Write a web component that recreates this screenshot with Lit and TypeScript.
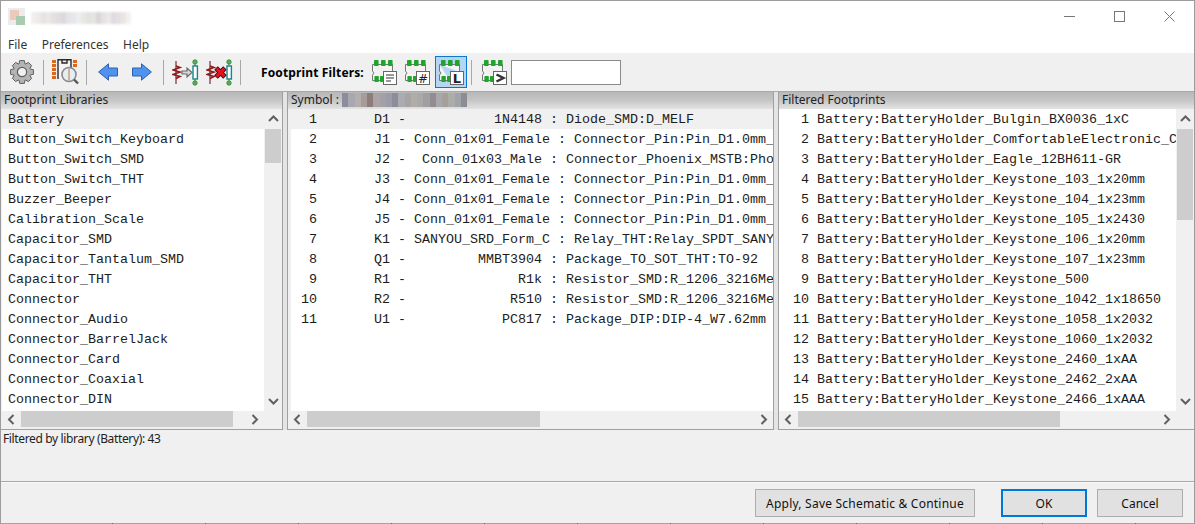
import { LitElement, css, html, svg } from 'lit'
import { customElement } from 'lit/decorators.js'

const LIBS = [
  'Battery', 'Button_Switch_Keyboard', 'Button_Switch_SMD', 'Button_Switch_THT', 'Buzzer_Beeper',
  'Calibration_Scale', 'Capacitor_SMD', 'Capacitor_Tantalum_SMD', 'Capacitor_THT', 'Connector',
  'Connector_Audio', 'Connector_BarrelJack', 'Connector_Card', 'Connector_Coaxial', 'Connector_DIN'
]

const PIN = 'Connector_Pin:Pin_D1.0mm_L'
const R = 'Resistor_SMD:R_1206_3216Met'
const SYMBOLS = [
  ['D1', '1N4148', 'Diode_SMD:D_MELF'],
  ['J1', 'Conn_01x01_Female', PIN],
  ['J2', 'Conn_01x03_Male', 'Connector_Phoenix_MSTB:Phoe'],
  ['J3', 'Conn_01x01_Female', PIN],
  ['J4', 'Conn_01x01_Female', PIN],
  ['J5', 'Conn_01x01_Female', PIN],
  ['K1', 'SANYOU_SRD_Form_C', 'Relay_THT:Relay_SPDT_SANYO'],
  ['Q1', 'MMBT3904', 'Package_TO_SOT_THT:TO-92'],
  ['R1', 'R1k', R],
  ['R2', 'R510', R],
  ['U1', 'PC817', 'Package_DIP:DIP-4_W7.62mm']
]

const FOOTPRINTS = [
  'Bulgin_BX0036_1xC', 'ComfortableElectronic_C', 'Eagle_12BH611-GR', 'Keystone_103_1x20mm',
  'Keystone_104_1x23mm', 'Keystone_105_1x2430', 'Keystone_106_1x20mm', 'Keystone_107_1x23mm',
  'Keystone_500', 'Keystone_1042_1x18650', 'Keystone_1058_1x2032', 'Keystone_1060_1x2032',
  'Keystone_2460_1xAA', 'Keystone_2462_2xAA', 'Keystone_2466_1xAAA'
]

// the name in the title bar and the symbol header is blurred out in the reference
const TITLE_BLUR = ['#f1eeee', '#eeeaea', '#e6e3e4', '#ece7e5', '#e3e0e2', '#dfdde0', '#dcd9de', '#e6e4e6', '#e5e8ea', '#eceeee',
  '#e8e7e6', '#e3e3dd', '#e6e4e2', '#d9d5d8', '#e4e2e2', '#ebe8e9', '#dfdbe0', '#e4e0e0', '#ebe5e2', '#f3f1f0']
const SYMBOL_BLUR = ['#8c8c9c', '#a8a8b0', '#b4aeac', '#a89c98', '#8c7c7c', '#aaa4a4', '#a4a0a8', '#9c9ca8', '#8c8c9c', '#acacb0',
  '#a8a4a4', '#b0aca8', '#aaa8a8', '#a0a0a0', '#948c90', '#a8a8ac', '#a4a09c', '#acaca8', '#a0a4a8', '#8c8c94']

function gearPath (cx: number, cy: number, r1: number, r2: number, teeth: number) {
  const pts: string[] = []
  for (let i = 0; i < teeth; i++) {
    const a = (i / teeth) * Math.PI * 2
    const w = Math.PI / teeth
    for (const [r, d] of [[r1, -w * 0.95], [r2, -w * 0.5], [r2, w * 0.5], [r1, w * 0.95]]) {
      pts.push(`${(cx + r * Math.cos(a + d)).toFixed(1)} ${(cy + r * Math.sin(a + d)).toFixed(1)}`)
    }
  }
  return 'M' + pts.join('L') + 'Z'
}

const gearIcon = html`<svg width="24" height="24" viewBox="0 0 24 24">
  <path d=${gearPath(12, 12, 8.6, 11.6, 8)} fill="#b4b4b4" stroke="#5e5e5e" stroke-width="1"/>
  <circle cx="12" cy="12" r="4.6" fill="#f0f0f0" stroke="#5e5e5e" stroke-width="1.2"/>
</svg>`

const inspectIcon = html`<svg width="28" height="26" viewBox="0 0 28 26">
  ${[1, 5, 9, 13, 17].map(y => svg`<rect x="0" y=${y} width="4" height="3" fill="#d9691e"/>`)}
  ${[1, 5].map(y => svg`<rect x="21" y=${y} width="4" height="3" fill="#d9691e"/>`)}
  <path d="M6 20V.8H19V9M10 .8V4H15V.8" fill="#f4f4f4" stroke="#2a2a2a" stroke-width="1.4"/>
  <circle cx="17" cy="15.5" r="7" fill="#e6eef2" stroke="#8a8a8a" stroke-width="1.6"/>
  <path d="M17 9.5V21.5" stroke="#c08a60" stroke-width="1.2"/>
  <path d="M22 20.5L26 24.5" stroke="#555" stroke-width="2.4"/>
</svg>`

const arrowLeft = html`<svg width="20" height="18" viewBox="0 0 20 18">
  <path d="M.6 9L10.5 .8V5H19.5V13H10.5V17.2Z" fill="#4f93ee" stroke="#2f62ac" stroke-width="1"/>
</svg>`

const arrowRight = html`<svg width="20" height="18" viewBox="0 0 20 18">
  <path d="M19.4 9L9.5 .8V5H.5V13H9.5V17.2Z" fill="#4f93ee" stroke="#2f62ac" stroke-width="1"/>
</svg>`

function netIcon (cross: boolean) {
  return html`<svg width="27" height="27" viewBox="0 0 27 27">
    <path d="M4 2V25" stroke="#9b5a5a" stroke-width="1.6"/>
    <path d="M4 7L8 8.5L1 11L8 13L1 15.5L8 17.5L4 19.5" fill="none" stroke="#8f1c1c" stroke-width="1.6"/>
    ${cross
      ? svg`<path d="M10 9L19 18M19 9L10 18" stroke="#111" stroke-width="5"/>
            <path d="M10.5 9.5L18.5 17.5M18.5 9.5L10.5 17.5" stroke="#e8101c" stroke-width="3.4"/>`
      : svg`<path d="M10 12H15V9L20 13.5L15 18V15H10Z" fill="#d8d8d8" stroke="#6a6a6a" stroke-width="1.2"/>`}
    <path d="M23 3V24" stroke="#3f9a3f" stroke-width="1"/>
    <rect x="21" y="7" width="4.4" height="13" fill="#fff" stroke="#16858c" stroke-width="1.4"/>
    <circle cx="23" cy="3" r="2.2" fill="#58b05a" stroke="#2f7f30" stroke-width=".8"/>
    <circle cx="23" cy="24" r="2.2" fill="#58b05a" stroke="#2f7f30" stroke-width=".8"/>
  </svg>`
}

function filterIcon (badge: unknown) {
  return html`<svg width="26" height="26" viewBox="0 0 26 26">
    <path d="M1.5 5.5H21.5V13M12 21.5H1.5V16L3 14L1.5 12V5.5" fill="#f4f4f4" stroke="#777" stroke-width="1"/>
    ${[3, 10, 17].map(x => svg`<rect x=${x} y="1" width="4.6" height="6" rx=".8" fill="#1fa42c"/>`)}
    ${[3.4, 9].map(x => svg`<rect x=${x} y="17" width="4.4" height="6" rx=".8" fill="#1fa42c"/>`)}
    <rect x="12.5" y="12.5" width="13" height="13" fill="#fff" stroke="#666" stroke-width="1"/>
    ${badge}
  </svg>`
}

const filterDesc = filterIcon(svg`<path d="M15 16H23M15 19H23M15 22H20" stroke="#333" stroke-width="1"/>`)
const filterPin = filterIcon(svg`<text class="badge" x="19" y="23.6" text-anchor="middle" font-size="12" font-style="italic">#</text>`)
const filterLib = filterIcon(svg`<text class="badge" x="19" y="23.8" text-anchor="middle" font-size="13" font-weight="700">L</text>`)
const filterName = filterIcon(svg`<path d="M15.5 15.5L22.5 19L15.5 22.5" fill="none" stroke="#333" stroke-width="2.4"/>`)

function chevron (dir: 'up' | 'down' | 'left' | 'right') {
  const d = { up: 'M1 7L5.5 2.5L10 7', down: 'M1 3L5.5 7.5L10 3', left: 'M7.5 1L3 5.5L7.5 10', right: 'M3.5 1L8 5.5L3.5 10' }[dir]
  return html`<svg class="chev" width="11" height="11" viewBox="0 0 11 11"><path d=${d} fill="none" stroke="#606060" stroke-width="2"/></svg>`
}

@customElement('app-root')
export class AppRoot extends LitElement {
  static styles = css`
    :host {
      display: block;
      font-family: "Noto Sans", sans-serif;
      font-size: 12px;
      color: #111;
    }
    .window {
      height: 524px;
      box-sizing: border-box;
      display: flex;
      flex-direction: column;
      background: #f0f0f0;
      border: 1px solid #9c9c9c;
      border-bottom: none;
      overflow: hidden;
    }
    .titlebar {
      height: 34px;
      flex: none;
      background: #fff;
      display: flex;
      align-items: flex-start;
      position: relative;
    }
    .app-icon {
      margin: 7px 0 0 7px;
      width: 17px;
      height: 17px;
      flex: none;
      background:
        linear-gradient(#a9cbb0, #a9cbb0) 8px 8px / 9px 9px no-repeat,
        linear-gradient(#edc9bc, #edc9bc) 2px 2px / 9px 10px no-repeat,
        #ececec;
    }
    .blur { display: flex; }
    .blur span { display: block; height: 100%; }
    .title-blur {
      margin: 11px 0 0 6px;
      height: 12px;
      width: 100px;
      filter: blur(1px);
    }
    .title-blur span { flex: 1; }
    .winbtns {
      margin-left: auto;
      display: flex;
    }
    .winbtn {
      width: 50px;
      height: 31px;
      display: flex;
      align-items: center;
      justify-content: center;
    }
    .menubar {
      height: 18px;
      flex: none;
      background: #fff;
      display: flex;
      gap: 14.5px;
      padding-left: 7px;
      line-height: 19px;
      color: #333;
    }
    .toolbar {
      height: 38px;
      flex: none;
      display: flex;
      align-items: center;
      border-bottom: 1px solid #a8a8a8;
      box-sizing: content-box;
    }
    .tool { display: flex; flex: none; }
    .sep {
      width: 1px;
      height: 25px;
      background: #a8a8a8;
      flex: none;
    }
    .filter-label { font-weight: 700; flex: none; color: #000; width: 104px; white-space: nowrap; letter-spacing: .14px; }
    .toggle {
      width: 30px;
      height: 30px;
      flex: none;
      display: flex;
      align-items: center;
      justify-content: center;
      border: 1px solid transparent;
    }
    .toggle.on { background: #b4d6f2; border-color: #0a78d0; }
    .search {
      width: 108px;
      height: 23px;
      background: #fff;
      border: 1px solid #8a8a8a;
      flex: none;
    }
    .badge { font-family: "DejaVu Sans", sans-serif; fill: #222; }
    .panels {
      height: 338px;
      flex: none;
      display: flex;
      gap: 4px;
      background: #e4e4e4;
    }
    .panel {
      display: grid;
      grid-template-rows: 17px 302px 17px 1fr;
      border: 1px solid #a0a0a0;
      border-width: 0 1px 1px 1px;
      box-sizing: border-box;
      background: #f0f0f0;
      min-width: 0;
    }
    .panel.left { width: 282px; border-left: none; }
    .panel.center { width: 487px; }
    .panel.right { width: 416px; border-right: none; }
    .head {
      background: linear-gradient(#b8b8b8, #c4c4c4 45%, #e2e2e2);
      display: flex;
      align-items: center;
      gap: 3px;
      padding-left: 3px;
      padding-bottom: 2px;
      box-sizing: border-box;
      line-height: 15px;
      white-space: nowrap;
      color: #222;
    }
    .symbol-blur {
      width: 125px;
      height: 14px;
      filter: blur(.6px);
    }
    .symbol-blur span { flex: 1; }
    .body {
      display: flex;
      min-width: 0;
      overflow: hidden;
    }
    .list {
      flex: 1;
      min-width: 0;
      overflow: hidden;
      background: #fff;
      font-family: "Liberation Mono", monospace;
      font-size: 13.33px;
      color: #1c1c1c;
    }
    .left .list { margin-left: 1px; }
    .center .list { margin-left: 3px; }
    .row {
      height: 20px;
      line-height: 22px;
      white-space: pre;
    }
    .row.sel { background: #f0f0f0; }
    .left .row { padding-left: 6px; }
    .center .row { display: flex; }
    .center .num { width: 26px; text-align: right; flex: none; }
    .center .txt { margin-left: 57px; }
    .right .row { padding-left: 6px; }
    .vbar {
      width: 18px;
      flex: none;
      display: flex;
      flex-direction: column;
      align-items: stretch;
    }
    .vbtn { height: 20px; display: flex; align-items: center; justify-content: center; flex: none; }
    .vthumb { background: #cdcdcd; margin: 0 1px; flex: none; }
    .vspace { flex: 1; }
    .hbar {
      display: flex;
      align-items: stretch;
      min-width: 0;
    }
    .left .hbar { padding-left: 1px; }
    .hbtn { width: 19px; display: flex; align-items: center; justify-content: center; flex: none; }
    .hthumb { background: #cdcdcd; margin: 0; flex: none; height: 16px; }
    .hspace { flex: 1; }
    .corner { width: 18px; flex: none; }
    .status {
      height: 52px;
      flex: none;
      padding-left: 2px;
      padding-top: 1px;
      line-height: 15px;
      letter-spacing: -.36px;
      box-sizing: border-box;
      color: #222;
      border-bottom: 1px solid #a8a8a8;
    }
    .actions {
      flex: 1;
      display: flex;
      align-items: flex-start;
      padding-top: 6px;
      padding-right: 11px;
      justify-content: flex-end;
      border-top: 1px solid #f8f8f8;
    }
    button {
      font: inherit;
      color: #111;
      background: #e1e1e1;
      border: 1px solid #adadad;
      box-sizing: border-box;
      height: 28px;
      padding: 0;
      flex: none;
    }
    .apply { width: 220px; margin-right: 26px; letter-spacing: .22px; }
    .ok { width: 86px; margin-right: 10px; border: 2px solid #0078d7; }
    .cancel { width: 86px; }
    .bottom-edge {
      height: 1px;
      flex: none;
      background: repeating-linear-gradient(90deg, #a4a4a4 0 92px, #666 92px 93px);
      background-position: 19px 0;
    }
  `

  _vbar (thumb: number) {
    return html`<div class="vbar">
      <div class="vbtn">${chevron('up')}</div>
      <div class="vthumb" style="height:${thumb}px"></div>
      <div class="vspace"></div>
      <div class="vbtn">${chevron('down')}</div>
    </div>`
  }

  _hbar (thumb: number, corner: boolean) {
    return html`<div class="hbar">
      <div class="hbtn">${chevron('left')}</div>
      <div class="hthumb" style="width:${thumb}px"></div>
      <div class="hspace"></div>
      <div class="hbtn">${chevron('right')}</div>
      ${corner ? html`<div class="corner"></div>` : ''}
    </div>`
  }

  render () {
    return html`<div class="window">
      <div class="titlebar">
        <div class="app-icon"></div>
        <div class="blur title-blur">${TITLE_BLUR.map(c => html`<span style="background:${c}"></span>`)}</div>
        <div class="winbtns">
          <div class="winbtn"><svg width="11" height="11" viewBox="0 0 11 11"><path d="M0 5.5H11" stroke="#777" fill="none"/></svg></div>
          <div class="winbtn"><svg width="11" height="11" viewBox="0 0 11 11"><rect x=".5" y=".5" width="10" height="10" stroke="#777" fill="none"/></svg></div>
          <div class="winbtn"><svg width="11" height="11" viewBox="0 0 11 11"><path d="M.5 .5L10.5 10.5M10.5 .5L.5 10.5" stroke="#777" fill="none"/></svg></div>
        </div>
      </div>
      <div class="menubar"><span>File</span><span>Preferences</span><span>Help</span></div>
      <div class="toolbar">
        <span class="tool" style="margin-left:9px">${gearIcon}</span>
        <span class="sep" style="margin-left:9px"></span>
        <span class="tool" style="margin-left:8px">${inspectIcon}</span>
        <span class="sep" style="margin-left:6px"></span>
        <span class="tool" style="margin-left:11px">${arrowLeft}</span>
        <span class="tool" style="margin-left:14px">${arrowRight}</span>
        <span class="sep" style="margin-left:11px"></span>
        <span class="tool" style="margin-left:8px">${netIcon(false)}</span>
        <span class="tool" style="margin-left:7px">${netIcon(true)}</span>
        <span class="sep" style="margin-left:7px"></span>
        <span class="filter-label" style="margin-left:20px">Footprint Filters:</span>
        <span class="toggle" style="margin-left:3px">${filterDesc}</span>
        <span class="toggle" style="margin-left:1px">${filterPin}</span>
        <span class="toggle on" style="margin-left:2px">${filterLib}</span>
        <span class="sep" style="margin-left:4px"></span>
        <span class="tool" style="margin-left:9px">${filterName}</span>
        <span class="search" style="margin-left:4px"></span>
      </div>
      <div class="panels">
        <section class="panel left">
          <div class="head">Footprint Libraries</div>
          <div class="body">
            <div class="list">${LIBS.map((l, i) => html`<div class="row ${i === 0 ? 'sel' : ''}">${l}</div>`)}</div>
            ${this._vbar(34)}
          </div>
          ${this._hbar(212, true)}
        </section>
        <section class="panel center">
          <div class="head">Symbol : <div class="blur symbol-blur">${SYMBOL_BLUR.map(c => html`<span style="background:${c}"></span>`)}</div></div>
          <div class="body">
            <div class="list">${SYMBOLS.map((s, i) => html`<div class="row ${i === 0 ? 'sel' : ''}"><span class="num">${i + 1}</span><span class="txt">${s[0]} - ${s[1].padStart(16)} : ${s[2]}</span></div>`)}</div>
          </div>
          ${this._hbar(233, false)}
        </section>
        <section class="panel right">
          <div class="head">Filtered Footprints</div>
          <div class="body">
            <div class="list">${FOOTPRINTS.map((f, i) => html`<div class="row">${String(i + 1).padStart(3)} Battery:BatteryHolder_${f}</div>`)}</div>
            ${this._vbar(91)}
          </div>
          ${this._hbar(262, true)}
        </section>
      </div>
      <div class="status">Filtered by library (Battery): 43</div>
      <div class="actions">
        <button class="apply">Apply, Save Schematic &amp; Continue</button>
        <button class="ok">OK</button>
        <button class="cancel">Cancel</button>
      </div>
      <div class="bottom-edge"></div>
    </div>`
  }
}
